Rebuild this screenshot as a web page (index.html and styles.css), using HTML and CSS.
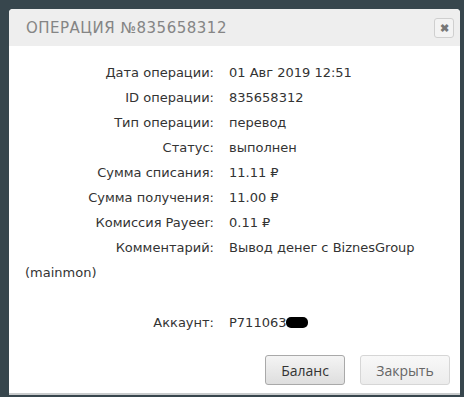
FILE: index.html
```html
<!DOCTYPE html>
<html lang="ru">
<head>
    <meta charset="UTF-8">
    <title>Операция №835658312</title>
    <link rel="stylesheet" href="styles.css">
</head>
<body>
    <div class="dialog">
        <div class="dialog-header">
            <span class="dialog-title">Операция №835658312</span>
            <button class="close-btn" title="Закрыть">&#10006;</button>
        </div>
        <div class="dialog-body">
            <div class="row"><span class="lbl">Дата операции:</span>01 Авг 2019 12:51</div>
            <div class="row"><span class="lbl">ID операции:</span>835658312</div>
            <div class="row"><span class="lbl">Тип операции:</span>перевод</div>
            <div class="row"><span class="lbl">Статус:</span>выполнен</div>
            <div class="row"><span class="lbl">Сумма списания:</span>11.11 &#8381;</div>
            <div class="row"><span class="lbl">Сумма получения:</span>11.00 &#8381;</div>
            <div class="row"><span class="lbl">Комиссия Payeer:</span>0.11 &#8381;</div>
            <div class="row"><span class="lbl">Комментарий:</span>Вывод денег с BiznesGroup (mainmon)</div>
            <div class="row empty"></div>
            <div class="row"><span class="lbl">Аккаунт:</span>P711063<span class="hidden-part"></span></div>
        </div>
        <div class="dialog-footer">
            <button class="btn btn-primary">Баланс</button>
            <button class="btn">Закрыть</button>
        </div>
    </div>
</body>
</html>
```

FILE: styles.css
```css
body {
    margin: 0;
    padding: 9px 4px 0 9px;
    background-color: #37464d;
    font-family: "DejaVu Sans", sans-serif;
    color: #333;
    height: 397px;
    box-sizing: border-box;
    overflow: hidden;
}
.dialog {
    background: white;
    border-radius: 4px 4px 0 0;
    border-bottom: 2px solid #c9cccd;
    height: 386px;
    box-sizing: border-box;
    display: flex;
    flex-direction: column;
}
.dialog-header {
    background-color: #eeeeee;
    height: 37px;
    flex-shrink: 0;
    display: flex;
    align-items: center;
    justify-content: space-between;
    padding: 0 6px 0 17px;
    border-radius: 4px 4px 0 0;
}
.dialog-title {
    text-transform: uppercase;
    color: #858585;
    font-size: 15px;
    letter-spacing: 0.5px;
}
.close-btn {
    width: 20px;
    height: 20px;
    padding: 0;
    border: 1px solid #cfcfcf;
    border-radius: 3px;
    background: #f3f3f3;
    color: #777;
    font-size: 11px;
    line-height: 18px;
    font-weight: bold;
}
.dialog-body {
    padding: 14px 16px 0 16px;
    font-size: 13px;
    line-height: 25px;
}
.row.empty {
    height: 25px;
}
.lbl {
    display: inline-block;
    width: 189px;
    text-align: right;
    margin-right: 15px;
}
.hidden-part {
    display: inline-block;
    width: 22px;
    height: 11px;
    background: #000;
    border-radius: 5px;
    vertical-align: -1px;
}
.dialog-footer {
    display: flex;
    justify-content: flex-end;
    gap: 15px;
    padding: 20px 10px 0 0;
}
.btn {
    font-family: "Open Sans", sans-serif;
    font-size: 14px;
    height: 30px;
    padding: 0 14px;
    border: 1px solid #a9a9a9;
    border-radius: 3px;
    background: linear-gradient(#f4f4f4, #dedede);
    color: #555;
}
.btn-primary {
    width: 80px;
    color: #333;
}
.btn:last-child {
    width: 90px;
    border-color: #d6d6d6;
    background: linear-gradient(#f8f8f8, #ececec);
    color: #666;
}
```
